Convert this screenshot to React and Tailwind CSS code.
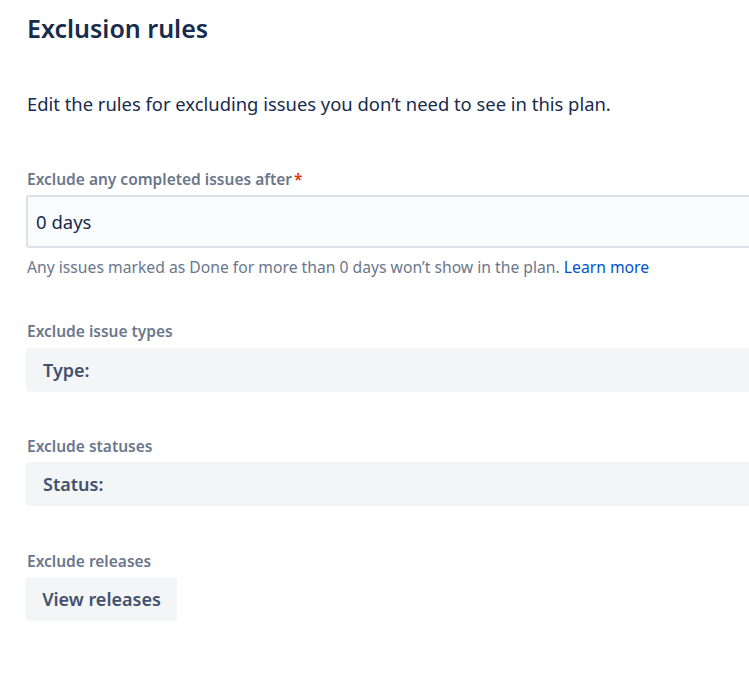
export default function App() {
  return (
    <div className="min-h-screen bg-white overflow-hidden font-['Noto_Sans',sans-serif]">
      <div className="pl-[26px] pt-[10px]">
        <h1 className="text-[25px] leading-[36px] font-semibold text-[#172b4d] pl-[1px]">
          Exclusion rules
        </h1>
        <p className="mt-[45px] text-[18.4px] leading-[26px] text-[#172b4d] pl-[1px]">
          Edit the rules for excluding issues you don’t need to see in this plan.
        </p>

        <div className="mt-[51px]">
          <label className="block text-[15.5px] leading-[22px] font-semibold text-[#6b778c] pl-[1px]">
            Exclude any completed issues after
            <span className="text-[#de350b] pl-[2px]">*</span>
          </label>
          <div className="mt-[5px] h-[53px] w-[760px] rounded-[3px] border-2 border-[#dfe1e6] bg-[#fafbfc] flex items-center px-[8px]">
            <span className="text-[18.5px] text-[#172b4d]">0 days</span>
          </div>
          <p className="mt-[8px] text-[15.7px] leading-[22px] text-[#6b778c] pl-[1px]">
            Any issues marked as Done for more than 0 days won’t show in the plan.{" "}
            <a className="text-[#0052cc]">Learn more</a>
          </p>
        </div>

        <div className="mt-[42px]">
          <label className="block text-[15.5px] leading-[22px] font-semibold text-[#6b778c] pl-[1px]">
            Exclude issue types
          </label>
          <div className="mt-[6px] h-[44px] w-[760px] rounded-[3px] bg-[#f4f5f7] flex items-center px-[17px]">
            <span className="text-[18px] font-semibold text-[#42526e]">Type:</span>
          </div>
        </div>

        <div className="mt-[43px]">
          <label className="block text-[15.5px] leading-[22px] font-semibold text-[#6b778c] pl-[1px]">
            Exclude statuses
          </label>
          <div className="mt-[5px] h-[44px] w-[760px] rounded-[3px] bg-[#f4f5f7] flex items-center px-[17px]">
            <span className="text-[18px] font-semibold text-[#42526e]">Status:</span>
          </div>
        </div>

        <div className="mt-[44px]">
          <label className="block text-[15.5px] leading-[22px] font-semibold text-[#6b778c] pl-[1px]">
            Exclude releases
          </label>
          <button className="mt-[5px] h-[44px] w-[151px] rounded-[3px] bg-[#f4f5f7] flex items-center justify-center">
            <span className="text-[18px] font-semibold text-[#42526e]">View releases</span>
          </button>
        </div>
      </div>
    </div>
  );
}
